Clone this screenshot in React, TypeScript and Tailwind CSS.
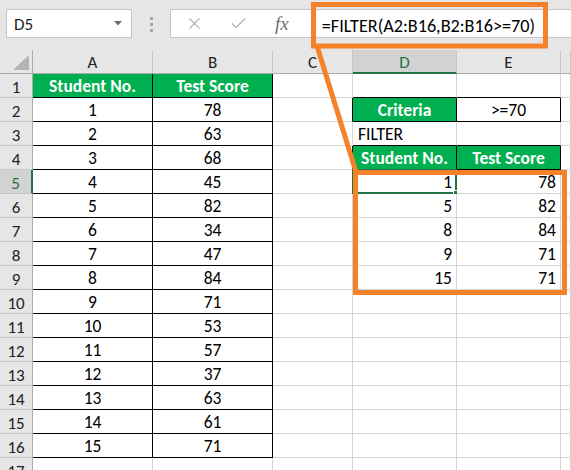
import React from "react";
import { X, Check } from "lucide-react";

const FONT = { fontFamily: "Carlito, Lato, 'Noto Sans', sans-serif" };

const scores = [78, 63, 68, 45, 82, 34, 47, 84, 71, 53, 57, 37, 63, 61, 71];
const filtered: [number, number][] = [
  [1, 78],
  [5, 82],
  [8, 84],
  [9, 71],
  [15, 71],
];

type Cell = {
  text?: string;
  kind?: "green" | "center" | "left" | "right";
  rb?: boolean;
  bb?: boolean;
  selected?: boolean;
};

function getCell(row: number, col: number): Cell {
  const c: Cell = {};
  if (col <= 1 && row >= 1 && row <= 16) {
    c.rb = true;
    c.bb = true;
    if (row === 1) {
      c.text = col === 0 ? "Student No." : "Test Score";
      c.kind = "green";
    } else {
      c.text = col === 0 ? String(row - 1) : String(scores[row - 2]);
      c.kind = "center";
    }
  }
  if (col === 2 && (row === 2 || row === 4)) c.rb = true;
  if ((col === 3 || col === 4) && (row === 1 || row === 3)) c.bb = true;
  if (col === 3 || col === 4) {
    if (row === 2) {
      c.rb = true;
      c.bb = true;
      c.text = col === 3 ? "Criteria" : ">=70";
      c.kind = col === 3 ? "green" : "center";
    }
    if (row === 3 && col === 3) {
      c.text = "FILTER";
      c.kind = "left";
    }
    if (row === 4) {
      c.rb = true;
      c.bb = true;
      c.text = col === 3 ? "Student No." : "Test Score";
      c.kind = "green";
    }
    if (row >= 5 && row <= 9) {
      c.text = String(filtered[row - 5][col - 3]);
      c.kind = "right";
      if (row === 5 && col === 3) c.selected = true;
    }
  }
  return c;
}

function GridCell({ cell }: { cell: Cell }) {
  const border = `border-r border-b ${cell.rb ? "border-r-black" : "border-r-[#d4d4d4]"} ${
    cell.bb ? "border-b-black" : "border-b-[#d4d4d4]"
  }`;
  let inner = "";
  if (cell.kind === "green") inner = "bg-[#00b050] text-white font-bold justify-center";
  else if (cell.kind === "center") inner = "bg-white text-black justify-center";
  else if (cell.kind === "left") inner = "bg-white text-black justify-start pl-[5px]";
  else if (cell.kind === "right") inner = "bg-white text-black justify-end pr-[4px]";
  else inner = "bg-white";
  return (
    <div className={`relative h-[24px] flex items-center pt-[3px] text-[17.5px] leading-none whitespace-nowrap ${border} ${inner}`}>
      {cell.text}
      {cell.selected && (
        <div className="absolute left-[-1px] top-[-1px] right-[-1px] bottom-[-1px] border-2 border-[#217346] pointer-events-none">
          <div className="absolute right-[-4px] bottom-[-4px] w-[6px] h-[6px] bg-[#217346] border border-white" />
        </div>
      )}
    </div>
  );
}

export default function App() {
  const rows = Array.from({ length: 17 }, (_, i) => i + 1);
  const letters = ["A", "B", "C", "D", "E", ""];
  return (
    <div className="relative w-[571px] h-[470px] overflow-hidden bg-white text-black" style={FONT}>
      {/* Formula bar */}
      <div className="h-[50px] bg-[#e6e6e6] flex items-start pt-[9px]">
        <div className="ml-[6px] w-[126px] h-[29px] bg-white border border-[#c6c6c6] flex items-center justify-between pl-[7px] pr-[9px]">
          <span className="text-[17px] leading-none pt-[2px] text-[#222]">D5</span>
          <svg width="8" height="5" viewBox="0 0 8 5">
            <polygon points="0,0 8,0 4,4.5" fill="#6b6b6b" />
          </svg>
        </div>
        <div className="w-[38px] h-[29px] flex flex-col items-center justify-center gap-[3px] pt-[1px]">
          <div className="w-[3px] h-[3px] bg-[#a6a6a6]" />
          <div className="w-[3px] h-[3px] bg-[#a6a6a6]" />
          <div className="w-[3px] h-[3px] bg-[#a6a6a6]" />
        </div>
        <div className="flex-1 h-[29px] bg-white border border-r-0 border-[#c6c6c6] flex items-center">
          <X className="ml-[14px]" size={19} strokeWidth={1.4} color="#b3b3b3" />
          <Check className="ml-[25px]" size={19} strokeWidth={1.6} color="#b3b3b3" />
          <span
            className="ml-[27px] text-[19px] italic leading-none text-[#6e6e6e]"
            style={{ fontFamily: "'Liberation Serif', serif" }}
          >
            fx
          </span>
          <span className="ml-[33px] text-[18.2px] leading-none pt-[6px] text-black whitespace-nowrap">
            =FILTER(A2:B16,B2:B16&gt;=70)
          </span>
        </div>
      </div>

      {/* Sheet grid */}
      <div className="grid grid-cols-[33px_120px_120px_80px_104px_104px_1fr]">
        <div className="h-[24px] bg-[#e6e6e6] border-r border-b border-[#ababab] flex items-end justify-end pr-[3px] pb-[3px]">
          <svg width="16" height="15" viewBox="0 0 16 15">
            <polygon points="0,15 16,0 16,15" fill="#b4b4b4" />
          </svg>
        </div>
        {letters.map((l, i) =>
          l === "D" ? (
            <div
              key={i}
              className="h-[24px] bg-[#d2d2d2] border-r border-r-[#c6c6c6] border-b-2 border-b-[#217346] flex items-center justify-center pt-[2px] text-[17px] leading-none text-[#217346]"
            >
              {l}
            </div>
          ) : (
            <div
              key={i}
              className="h-[24px] bg-[#e6e6e6] border-r border-r-[#c6c6c6] border-b border-b-[#ababab] flex items-center justify-center pt-[2px] text-[17px] leading-none text-[#222]"
            >
              {l}
            </div>
          )
        )}
        {rows.map((r) => (
          <React.Fragment key={r}>
            {r === 5 ? (
              <div className="h-[24px] bg-[#d2d2d2] border-r-2 border-r-[#217346] border-b border-b-[#c6c6c6] flex items-center justify-center pt-[3px] text-[17px] leading-none text-[#217346]">
                {r}
              </div>
            ) : (
              <div className="h-[24px] bg-[#e6e6e6] border-r border-r-[#ababab] border-b border-b-[#c6c6c6] flex items-center justify-center pt-[3px] text-[17px] leading-none text-[#222]">
                {r}
              </div>
            )}
            {letters.map((_, ci) => (
              <GridCell key={ci} cell={getCell(r, ci)} />
            ))}
          </React.Fragment>
        ))}
      </div>

      {/* Orange annotation overlay */}
      <svg
        className="absolute left-0 top-0 pointer-events-none"
        width="571"
        height="470"
        viewBox="0 0 571 470"
      >
        <rect x="313.5" y="4.5" width="232" height="41.5" fill="none" stroke="#f5822a" strokeWidth="5" />
        <line x1="317" y1="46" x2="356" y2="172" stroke="#f5822a" strokeWidth="5" />
        <rect x="355.5" y="172.5" width="209" height="120" fill="none" stroke="#f5822a" strokeWidth="5" />
      </svg>
    </div>
  );
}
